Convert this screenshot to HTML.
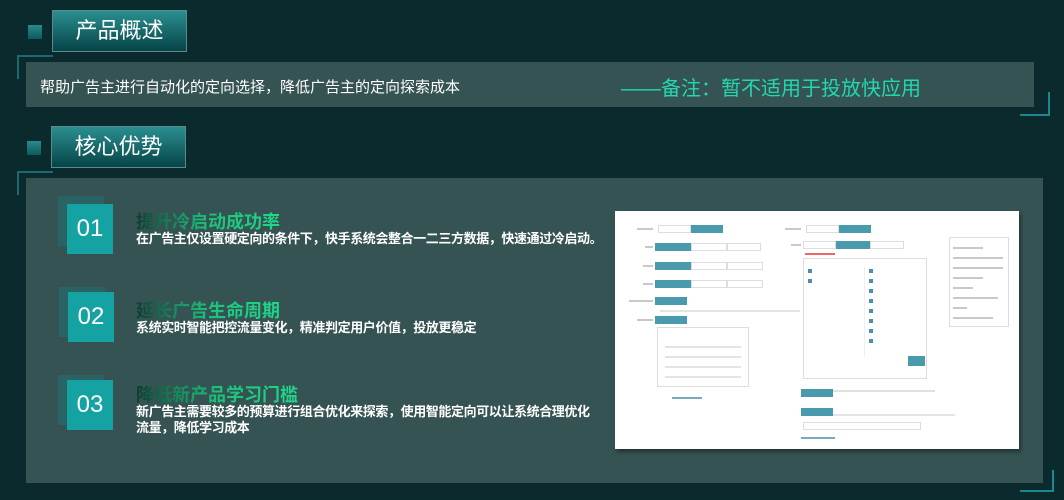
<!DOCTYPE html>
<html><head><meta charset="utf-8"><style>
*{margin:0;padding:0;box-sizing:border-box}
body{width:1064px;height:500px;overflow:hidden;background:#0a2a2e;font-family:"Liberation Sans","Noto Sans CJK SC",sans-serif;position:relative}
.a{position:absolute}
.sq{width:14px;height:14px;background:linear-gradient(#2a8a8a,#0c5a5e)}
.tt{background:linear-gradient(#2a8f8f,#064448);border:1px solid #5a8a8a;color:#fff;font-size:22px;text-align:center;line-height:40px}
.ban{background:#365353}
.num{width:46px;height:50px;background:#14a2a2;color:#fff;font-size:24px;text-align:center;line-height:50px}
.sh{width:46px;height:50px;background:#2a6363}
.h{font-size:18px;font-weight:bold;background:linear-gradient(90deg,#0c3a30,#148a5a 25%,#1bc27a 50%,#20d88a);-webkit-background-clip:text;color:transparent;white-space:nowrap}
.b{color:#fff;font-size:13px;line-height:16px;font-weight:bold;letter-spacing:-0.4px}
.w{background:#fff;box-shadow:2px 3px 4px rgba(0,0,0,.4)}
.bt{position:absolute;height:8px;background:#4a9aae}
.bo{position:absolute;height:8px;border:1px solid #ddd;background:#fff}
.g{position:absolute;height:2px;background:#c8c8c8}
.ck{position:absolute;width:4px;height:4px;background:#4a8fb0}
</style></head><body>
<div class="a sq" style="left:28px;top:25px"></div>
<div class="a tt" style="left:52px;top:10px;width:135px;height:42px">产品概述</div>
<div class="a" style="left:17px;top:55px;width:36px;height:24px;border-left:2px solid #1a6a70;border-top:2px solid #1a6a70"></div>
<div class="a ban" style="left:26px;top:62px;width:1008px;height:45px"></div>
<div class="a" style="left:1020px;top:92px;width:30px;height:24px;border-right:2px solid #1a8a90;border-bottom:2px solid #1a8a90"></div>
<div class="a" style="left:40px;top:76px;color:#fff;font-size:15px">帮助广告主进行自动化的定向选择，降低广告主的定向探索成本</div>
<div class="a" style="left:621px;top:72px;color:#22d8b0;font-size:20px">——备注：暂不适用于投放快应用</div>
<div class="a sq" style="left:27px;top:141px"></div>
<div class="a tt" style="left:51px;top:126px;width:135px;height:42px">核心优势</div>
<div class="a" style="left:17px;top:171px;width:36px;height:24px;border-left:2px solid #1a6a70;border-top:2px solid #1a6a70"></div>
<div class="a ban" style="left:26px;top:178px;width:1017px;height:305px"></div>
<div class="a" style="left:1020px;top:470px;width:34px;height:22px;border-right:2px solid #1a8a90;border-bottom:2px solid #1a8a90"></div>

<div class="a sh" style="left:58px;top:196px"></div><div class="a num" style="left:67px;top:204px">01</div>
<div class="a h" style="left:136px;top:208px">提升冷启动成功率</div>
<div class="a b" style="left:136px;top:231px">在广告主仅设置硬定向的条件下，快手系统会整合一二三方数据，快速通过冷启动。</div>
<div class="a sh" style="left:59px;top:287px"></div><div class="a num" style="left:68px;top:292px">02</div>
<div class="a h" style="left:136px;top:297px">延长广告生命周期</div>
<div class="a b" style="left:136px;top:320px">系统实时智能把控流量变化，精准判定用户价值，投放更稳定</div>
<div class="a sh" style="left:58px;top:375px"></div><div class="a num" style="left:67px;top:380px">03</div>
<div class="a h" style="left:136px;top:381px">降低新产品学习门槛</div>
<div class="a b" style="left:136px;top:404px;width:460px">新广告主需要较多的预算进行组合优化来探索，使用智能定向可以让系统合理优化<br>流量，降低学习成本</div>

<div class="a w" style="left:615px;top:211px;width:404px;height:238px">
<div class="g" style="left:22px;top:17px;width:16px"></div><div class="g" style="left:30px;top:35px;width:8px"></div><div class="g" style="left:28px;top:54px;width:10px"></div><div class="g" style="left:28px;top:72px;width:10px"></div><div class="g" style="left:14px;top:89px;width:24px"></div><div class="g" style="left:22px;top:108px;width:16px"></div>
<div class="bo" style="left:43px;top:14px;width:33px"></div><div class="bt" style="left:76px;top:14px;width:32px"></div>
<div class="bt" style="left:40px;top:32px;width:36px"></div><div class="bo" style="left:76px;top:32px;width:36px"></div><div class="bo" style="left:112px;top:32px;width:34px"></div>
<div class="bt" style="left:40px;top:51px;width:36px"></div><div class="bo" style="left:76px;top:51px;width:36px"></div><div class="bo" style="left:112px;top:51px;width:36px"></div>
<div class="bt" style="left:40px;top:69px;width:36px"></div><div class="bo" style="left:76px;top:69px;width:36px"></div><div class="bo" style="left:112px;top:69px;width:36px"></div>
<div class="bt" style="left:40px;top:86px;width:32px"></div>
<div class="g" style="left:45px;top:99px;width:140px;background:#e4e4e4"></div>
<div class="bt" style="left:40px;top:105px;width:32px"></div>
<div class="bo" style="left:42px;top:116px;width:92px;height:60px"></div>
<div class="g" style="left:50px;top:135px;width:76px;background:#e4e4e4"></div><div class="g" style="left:50px;top:145px;width:76px;background:#e4e4e4"></div><div class="g" style="left:50px;top:155px;width:76px;background:#e4e4e4"></div><div class="g" style="left:50px;top:165px;width:76px;background:#e4e4e4"></div>
<div class="g" style="left:170px;top:17px;width:16px"></div><div class="g" style="left:176px;top:33px;width:10px"></div>
<div class="bo" style="left:191px;top:14px;width:33px"></div><div class="bt" style="left:224px;top:14px;width:32px"></div>
<div class="bo" style="left:188px;top:30px;width:33px"></div><div class="bt" style="left:221px;top:30px;width:34px"></div><div class="bo" style="left:255px;top:30px;width:34px"></div>
<div class="g" style="left:190px;top:42px;width:30px;background:#e66"></div>
<div class="bo" style="left:188px;top:47px;width:124px;height:121px"></div>
<div class="a" style="left:188px;top:56px;width:62px;height:90px;border-right:1px solid #eee"></div>
<div class="bt" style="left:293px;top:145px;width:17px;height:10px"></div>
<div class="g" style="left:190px;top:179px;width:130px;background:#e0e0e0"></div>
<div class="bt" style="left:186px;top:178px;width:32px"></div>
<div class="g" style="left:190px;top:203px;width:150px;background:#e4e4e4"></div>
<div class="bt" style="left:186px;top:197px;width:32px"></div>
<div class="bo" style="left:188px;top:211px;width:118px"></div>
<div class="bo" style="left:334px;top:26px;width:60px;height:90px"></div>
<div class="g" style="left:338px;top:36px;width:30px"></div><div class="g" style="left:338px;top:46px;width:50px"></div><div class="g" style="left:338px;top:56px;width:50px"></div><div class="g" style="left:338px;top:66px;width:30px"></div><div class="g" style="left:338px;top:76px;width:20px"></div><div class="g" style="left:338px;top:86px;width:45px"></div><div class="g" style="left:338px;top:96px;width:14px"></div><div class="g" style="left:338px;top:106px;width:40px"></div>
<div class="ck" style="left:193px;top:58px"></div><div class="ck" style="left:193px;top:68px"></div>
<div class="ck" style="left:254px;top:58px"></div><div class="ck" style="left:254px;top:68px"></div><div class="ck" style="left:254px;top:78px"></div><div class="ck" style="left:254px;top:88px"></div><div class="ck" style="left:254px;top:98px"></div><div class="ck" style="left:254px;top:108px"></div><div class="ck" style="left:254px;top:118px"></div><div class="ck" style="left:254px;top:128px"></div>
<div class="g" style="left:57px;top:186px;width:30px;background:#7ab"></div>
<div class="g" style="left:186px;top:226px;width:34px;background:#7ab"></div>
</div>
</body></html>
